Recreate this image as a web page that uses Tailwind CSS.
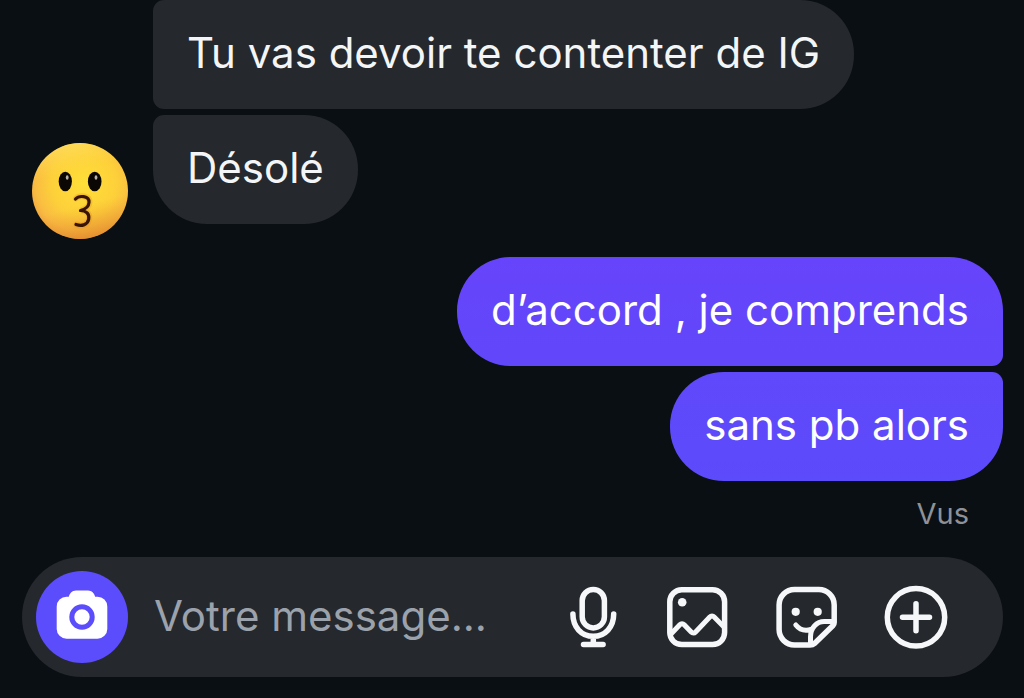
<!DOCTYPE html>
<html lang="fr">
<head>
  <meta charset="UTF-8">
  <meta name="viewport" content="width=device-width, initial-scale=1.0">
  <title>Messages</title>
  <script src="https://cdn.jsdelivr.net/npm/@tailwindcss/browser@4"></script>
</head>
<body class="bg-[#0a0f13] font-['Inter','Liberation_Sans',sans-serif] text-[42px] leading-[56px] text-[#f3f5f7]">
  <div class="flex min-h-screen flex-col">
    <main class="flex flex-1 flex-col gap-[18px]">

      <!-- Received messages -->
      <section class="flex items-end gap-[25px] pl-8">
        <svg class="size-24 shrink-0" viewBox="0 0 96 96" role="img" aria-label="Avatar">
          <defs>
            <radialGradient id="face" cx="0.54" cy="0.42" r="0.62">
              <stop offset="0" stop-color="#ffdf38"/>
              <stop offset="0.55" stop-color="#fdd03a"/>
              <stop offset="0.82" stop-color="#f9bc42"/>
              <stop offset="1" stop-color="#eea03e"/>
            </radialGradient>
            <linearGradient id="shine" x1="0.35" y1="0" x2="0.6" y2="1">
              <stop offset="0" stop-color="#ffe263" stop-opacity="0.8"/>
              <stop offset="0.3" stop-color="#ffd84a" stop-opacity="0"/>
              <stop offset="0.65" stop-color="#ee9a30" stop-opacity="0"/>
              <stop offset="1" stop-color="#dd8128" stop-opacity="0.7"/>
            </linearGradient>
          </defs>
          <circle cx="48" cy="48" r="48" fill="url(#face)"/>
          <circle cx="48" cy="48" r="48" fill="url(#shine)"/>
          <ellipse cx="33.300" cy="38.500" rx="6.600" ry="9.800" fill="#0b0704"/>
          <ellipse cx="62.700" cy="38.500" rx="6.800" ry="9.800" fill="#0b0704"/>
          <ellipse cx="35.200" cy="34.500" rx="1.400" ry="2.300" fill="#b9b3a8"/>
          <ellipse cx="64" cy="34.500" rx="1.400" ry="2.300" fill="#b9b3a8"/>
          <path d="M44 55.500c3.500-3.500 14-3 13.500 4-.3 4.500-4.500 6.700-8.500 7.800 5.700.2 9.200 3.400 8 9-1.200 6.200-7.600 7.200-12.500 5.200" fill="none" stroke="#d98a1c" stroke-opacity="0.300" stroke-width="6" stroke-linecap="round"/>
          <path d="M43.500 56c3.500-3.800 14-3.500 13.500 3.500-.3 4.500-4.500 7-8.500 8 5.700.2 9.200 3.300 8.200 8.800-1.200 6.200-7.600 6.900-12.700 5.200" fill="none" stroke="#3a1403" stroke-width="3.200" stroke-linecap="round" stroke-linejoin="round"/>
        </svg>
        <div class="flex flex-col items-start gap-1.5 pb-[15px]">
          <p class="rounded-l-[11px] rounded-r-[54px] bg-[#25282d] px-[34px] pt-[25px] pb-7">Tu vas devoir te contenter de IG</p>
          <p class="rounded-[54px] rounded-tl-[11px] bg-[#25282d] px-[34px] pt-[25px] pb-7">Désolé</p>
        </div>
      </section>

      <!-- Sent messages -->
      <section class="flex flex-col items-end gap-1.5 pr-[21px] text-white">
        <p class="rounded-[54px] rounded-br-[11px] bg-linear-to-b from-[#6644fb] to-[#6147fa] px-[34px] pt-[25px] pb-7">d’accord , je comprends</p>
        <p class="rounded-[54px] rounded-tr-[11px] bg-linear-to-b from-[#6048fb] to-[#5c4bfa] px-[34px] pt-[25px] pb-7">sans pb alors</p>
        <p class="px-[34px] pt-[9px] text-[29px] leading-9 text-[#8e9297]">Vus</p>
      </section>
    </main>

    <!-- Composer -->
    <form class="mr-[21px] mb-[21px] ml-[22px] flex h-[120px] items-center rounded-full bg-[#25282d] pr-[55px] pl-3.5">
      <button type="button" aria-label="Appareil photo" class="flex size-[92px] shrink-0 items-center justify-center rounded-full bg-[#5b4dfb]">
        <svg class="h-14 w-[52px]" viewBox="0 0 52 56">
          <path d="M10.500 7.700h2.300c1-3.400 3.400-6.200 7.200-6.200h12c3.800 0 6.200 2.800 7.200 6.200h2.300a9.800 9.800 0 0 1 9.800 9.800v22.400a9.800 9.800 0 0 1-9.800 9.800h-31a9.800 9.800 0 0 1-9.800-9.800V17.500a9.800 9.800 0 0 1 9.800-9.800z" fill="#fff"/>
          <circle cx="26" cy="28" r="10.200" fill="none" stroke="#5b4dfb" stroke-width="5"/>
        </svg>
      </button>
      <input type="text" aria-label="Votre message" placeholder="Votre message..." class="min-w-0 flex-1 pb-0.5 pl-[26px] outline-none placeholder:text-[#9ba2ab]">
      <div class="flex shrink-0 items-center gap-[46px]">
        <button type="button" aria-label="Message vocal">
          <svg class="block h-16 w-12" viewBox="0 0 48 64" fill="none" stroke="#f5f7f9" stroke-width="5.500" stroke-linecap="round">
            <rect x="12.200" y="4.500" width="22.200" height="38.400" rx="11.100"/>
            <path d="M2.900 29c0 13 8.400 22.300 20.400 22.300S43.700 42 43.700 29M23.300 51.500v8M13.500 59.600h19.600"/>
          </svg>
        </button>
        <button type="button" aria-label="Galerie">
          <svg class="block size-16" viewBox="0 0 64 64" fill="none" stroke="#f5f7f9" stroke-width="5.500" stroke-linecap="round" stroke-linejoin="round">
            <rect x="5.800" y="4.800" width="54.800" height="54.800" rx="12"/>
            <path d="M7 49l8.800-9.300c1.300-1.400 3.100-1.400 4.400 0l7 7.300c1.300 1.400 3.100 1.400 4.400 0L45.800 32c1.300-1.400 3.100-1.400 4.400 0L60 42" stroke-width="5"/>
            <circle cx="18.200" cy="17.300" r="4.300" fill="#f5f7f9" stroke="none"/>
          </svg>
        </button>
        <button type="button" aria-label="Autocollants">
          <svg class="block size-16" viewBox="0 0 64 64" fill="none" stroke="#f5f7f9" stroke-width="5.500" stroke-linecap="round" stroke-linejoin="round">
            <path d="M36 60H20.500A15.400 15.400 0 0 1 5.100 44.600V19.900A15.400 15.400 0 0 1 20.500 4.500h24.300a15.400 15.400 0 0 1 15.400 15.400v17.600c0 1.200-.4 2.200-1.200 3L40.500 58.500c-1.200 1.100-2.700 1.500-4.500 1.500z"/>
            <path d="M36.500 58.500v-6.500c0-9.500 6.300-15.500 13.800-15.500h9M21.800 40c3.500 4.400 8.700 6.300 15 4.500" stroke-width="5"/>
            <circle cx="21.700" cy="26.800" r="4.100" fill="#f5f7f9" stroke="none"/>
            <circle cx="43.700" cy="26.800" r="4.100" fill="#f5f7f9" stroke="none"/>
          </svg>
        </button>
        <button type="button" aria-label="Plus">
          <svg class="block size-16" viewBox="0 0 64 64" fill="none" stroke="#f5f7f9" stroke-width="5.500" stroke-linecap="round">
            <circle cx="32" cy="32.300" r="28.700"/>
            <path d="M32 18.800v27M18.500 32.300h27"/>
          </svg>
        </button>
      </div>
    </form>
  </div>
</body>
</html>
